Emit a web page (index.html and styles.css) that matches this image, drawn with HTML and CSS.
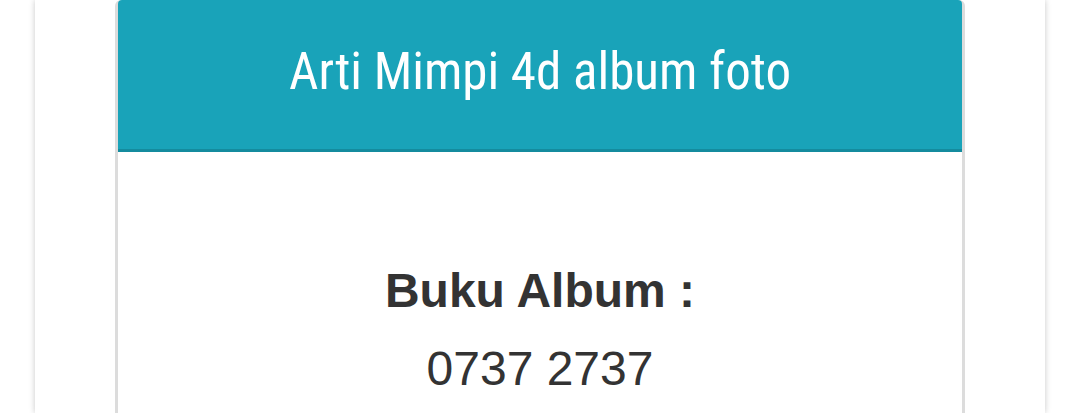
FILE: index.html
```html
<!DOCTYPE html>
<html lang="id">
<head>
<meta charset="utf-8">
<title>Arti Mimpi 4d album foto</title>
<link rel="stylesheet" href="styles.css">
</head>
<body>
<div class="page">
  <div class="card">
    <div class="card-header">
      <h1 class="card-title">Arti Mimpi 4d album foto</h1>
    </div>
    <div class="card-body">
      <p class="label">Buku Album :</p>
      <p class="number">0737 2737</p>
    </div>
  </div>
</div>
</body>
</html>
```
FILE: styles.css
```css
html, body {
  margin: 0;
  padding: 0;
  background: #fff;
  height: 100%;
  overflow: hidden;
}
.page {
  width: 1010px;
  margin: 0 auto;
  min-height: 100%;
  background: #fff;
  box-shadow: 0 0 6px rgba(0, 0, 0, 0.22);
  box-sizing: border-box;
}
.card {
  width: 850px;
  margin: 0 auto;
  border-left: 3px solid #dcdcdc;
  border-right: 3px solid #dcdcdc;
  border-radius: 6px 6px 0 0;
  box-sizing: border-box;
  min-height: 413px;
}
.card-header {
  background: #19a3b9;
  border-bottom: 3px solid #148b9e;
  height: 149px;
  display: flex;
  align-items: center;
  justify-content: center;
  border-radius: 4px 4px 0 0;
}
.card-title {
  margin: 0;
  color: #fff;
  font-family: Roboto, "Liberation Sans", sans-serif;
  font-stretch: condensed;
  font-weight: 400;
  font-size: 51px;
  line-height: 1;
  padding-bottom: 6px;
}
.card-body {
  text-align: center;
  color: #333;
  font-family: "Liberation Sans", Arial, sans-serif;
  padding-top: 108px;
}
.label {
  margin: 0;
  font-weight: 700;
  font-size: 48px;
  line-height: 62px;
}
.number {
  margin: 16px 0 0;
  font-size: 48px;
  line-height: 62px;
}
```
